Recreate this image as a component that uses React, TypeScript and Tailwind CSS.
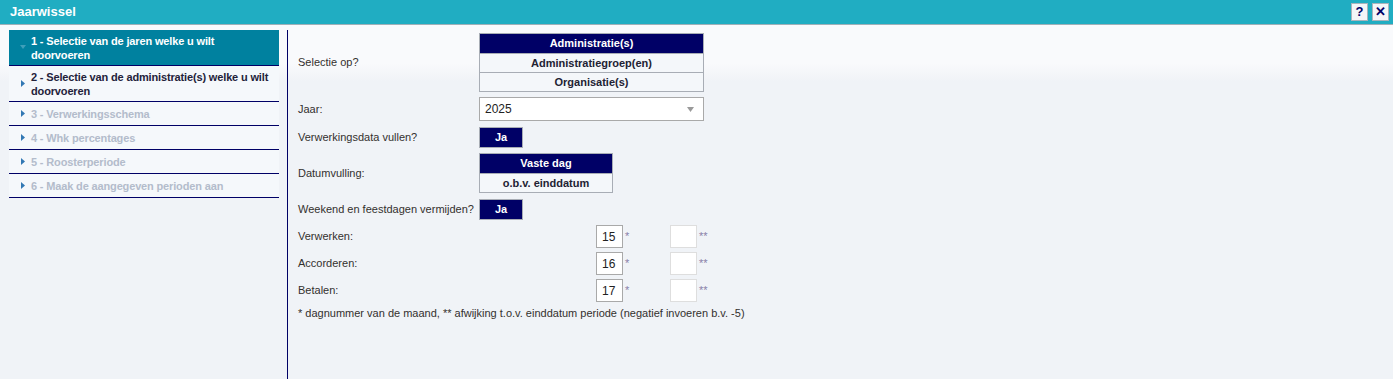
import { type ReactNode } from "react";

const font = "font-['Liberation_Sans',Arial,sans-serif]";

type NavItem = { label: ReactNode; state: "active" | "open" | "disabled"; tall?: boolean };

const navItems: NavItem[] = [
  { label: <>1 - Selectie van de jaren welke u wilt<br />doorvoeren</>, state: "active", tall: true },
  { label: <>2 - Selectie van de administratie(s) welke u wilt<br />doorvoeren</>, state: "open", tall: true },
  { label: "3 - Verwerkingsschema", state: "disabled" },
  { label: "4 - Whk percentages", state: "disabled" },
  { label: "5 - Roosterperiode", state: "disabled" },
  { label: "6 - Maak de aangegeven perioden aan", state: "disabled" },
];

function Arrow({ down, color }: { down?: boolean; color: string }) {
  return (
    <svg width="6" height="7" viewBox="0 0 6 7" className="shrink-0">
      {down ? <polygon points="0,1 6,1 3,5" fill={color} /> : <polygon points="1,0 5,3.5 1,7" fill={color} />}
    </svg>
  );
}

function Segmented({ options, width }: { options: string[]; width: string }) {
  return (
    <div className={`${width} flex flex-col border border-[#a8adb5]`}>
      {options.map((o, i) => (
        <div
          key={o}
          className={
            "flex h-[19px] items-center justify-center text-[11px] font-bold " +
            (i === 0 ? "bg-[#000066] text-white" : "border-t border-[#a8adb5] bg-[#f4f7fa] text-[#222233]")
          }
        >
          {o}
        </div>
      ))}
    </div>
  );
}

function JaButton() {
  return (
    <div className="flex h-[21px] w-[44px] items-center justify-center border border-[#a8adb5] bg-[#000066] text-[11px] font-bold text-white">
      Ja
    </div>
  );
}

function Row({ label, children, className = "" }: { label: string; children: ReactNode; className?: string }) {
  return (
    <div className={`flex items-center ${className}`}>
      <div className="w-[181px] shrink-0 text-[11px] text-[#33302e]">{label}</div>
      {children}
    </div>
  );
}

function DayRow({ label, value, className = "" }: { label: string; value: string; className?: string }) {
  return (
    <div className={`flex items-center ${className}`}>
      <div className="w-[298px] shrink-0 text-[11px] text-[#33302e]">{label}</div>
      <div className="flex h-[23px] w-[27px] items-center border border-[#a9a9a9] bg-white pl-[5px] text-[12px] text-[#222]">
        {value}
      </div>
      <span className="ml-[2px] w-[45px] text-[11px] leading-none text-[#8a7fa8]">*</span>
      <div className="h-[23px] w-[27px] border border-[#dedede] bg-white" />
      <span className="ml-[2px] text-[11px] leading-none text-[#8a7fa8]">**</span>
    </div>
  );
}

export default function App() {
  return (
    <div className={`flex h-[379px] w-[1393px] flex-col overflow-hidden ${font}`}>
      <div className="flex h-[25px] shrink-0 items-center justify-between border-b border-[#9fb0b8] bg-[#20adc2] pl-[10px] pr-[4px]">
        <span className="text-[13px] font-bold text-white">Jaarwissel</span>
        <div className="flex gap-[4px]">
          <div className="flex h-[18px] w-[17px] items-center justify-center border border-[#a9b4bc] bg-[#f4f6f8] text-[13px] font-bold text-[#000066]">
            ?
          </div>
          <div className="flex h-[18px] w-[17px] items-center justify-center border border-[#a9b4bc] bg-[#f4f6f8] text-[13px] font-bold text-[#000066]">
            ✕
          </div>
        </div>
      </div>

      <div className="flex flex-1 bg-[#f0f3f7] bg-[linear-gradient(to_bottom,#f9fafc_0px,#f9fafc_38px,#f0f3f7_56px)]">
        <div className="w-[287px] shrink-0 pl-[9px] pr-[8px] pt-[5px]">
          <div className="flex h-full flex-col">
            {navItems.map((item, i) => (
              <div
                key={i}
                className={
                  "flex items-center gap-[5px] whitespace-nowrap border-b border-[#000066] pl-[11px] text-[11px] font-bold leading-[14px] tracking-[-0.15px] " +
                  (item.tall ? "h-[36px] " : "h-[24px] ") +
                  (item.state === "active"
                    ? "bg-[#00819f] text-white"
                    : item.state === "open"
                      ? "bg-[#f5f8fb] text-[#23223a]"
                      : "bg-[#f5f8fb] text-[#b3bccb]")
                }
              >
                <Arrow down={item.state === "active"} color={item.state === "active" ? "#3f9fba" : "#3278b4"} />
                <span>{item.label}</span>
              </div>
            ))}
          </div>
        </div>
        <div className="mt-[5px] w-px shrink-0 bg-[#000066]" />

        <div className="flex flex-1 flex-col pl-[10px] pt-[8px]">
          <Row label="Selectie op?">
            <Segmented width="w-[225px]" options={["Administratie(s)", "Administratiegroep(en)", "Organisatie(s)"]} />
          </Row>
          <Row label="Jaar:" className="mt-[5px]">
            <div className="flex h-[24px] w-[225px] items-center justify-between border border-[#a9a9a9] bg-white pl-[5px] pr-[9px] text-[12px] text-[#222]">
              <span>2025</span>
              <svg width="7" height="5" viewBox="0 0 7 5">
                <polygon points="0,0 7,0 3.5,5" fill="#9a9a9a" />
              </svg>
            </div>
          </Row>
          <Row label="Verwerkingsdata vullen?" className="mt-[6px]">
            <JaButton />
          </Row>
          <Row label="Datumvulling:" className="mt-[5px]">
            <Segmented width="w-[134px]" options={["Vaste dag", "o.b.v. einddatum"]} />
          </Row>
          <Row label="Weekend en feestdagen vermijden?" className="mt-[6px]">
            <JaButton />
          </Row>
          <DayRow label="Verwerken:" value="15" className="mt-[5px]" />
          <DayRow label="Accorderen:" value="16" className="mt-[4px]" />
          <DayRow label="Betalen:" value="17" className="mt-[4px]" />
          <div className="mt-[3px] text-[11px] text-[#33302e]">
            * dagnummer van de maand, ** afwijking t.o.v. einddatum periode (negatief invoeren b.v. -5)
          </div>
        </div>
      </div>
    </div>
  );
}
